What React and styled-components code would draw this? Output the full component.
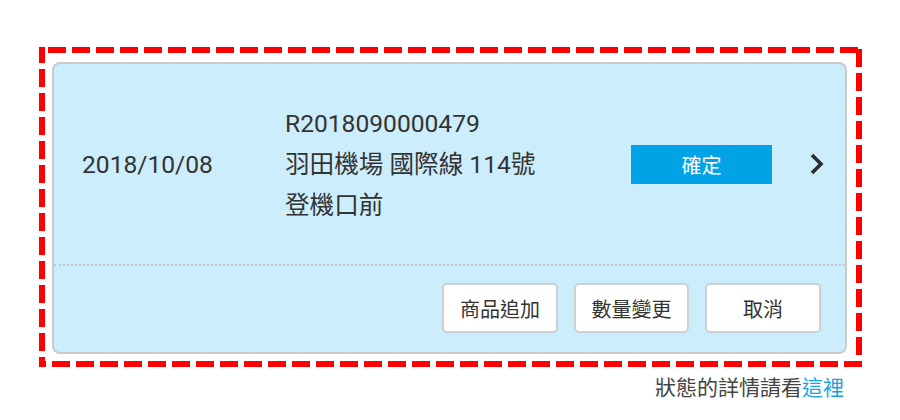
import React from 'react';
import styled, { createGlobalStyle } from 'styled-components';

const GlobalStyle = createGlobalStyle`
  body {
    margin: 0;
    background: #fff;
    font-family: Roboto, "Noto Sans CJK TC", "Noto Sans", sans-serif;
    color: #333;
  }
`;

const RED = '#ff0000';

const Page = styled.div`
  width: 900px;
  height: 420px;
  padding: 47px 0 0 39px;
  box-sizing: border-box;
`;

// dashed frame drawn with gradients so the dash / gap lengths match (18 / 6)
const Frame = styled.div`
  width: 823px;
  box-sizing: border-box;
  padding: 15px 15px 13px 13px;
  background-image:
    repeating-linear-gradient(to right, ${RED} 0 3px, transparent 3px 9px, ${RED} 9px 24px),
    repeating-linear-gradient(to right, ${RED} 0 7px, transparent 7px 13px, ${RED} 13px 24px),
    repeating-linear-gradient(to bottom, ${RED} 0 16px, transparent 16px 22px, ${RED} 22px 24px),
    repeating-linear-gradient(to bottom, transparent 0 2px, ${RED} 2px 20px, transparent 20px 24px);
  background-position: left top, left bottom, left top, right top;
  background-size: 100% 6px, 100% 6px, 6px 100%, 6px 100%;
  background-repeat: no-repeat;
`;

const Card = styled.div`
  background: #ccedfb;
  border: 2px solid #c9cbcc;
  border-radius: 8px;
`;

const Summary = styled.div`
  height: 200px;
  display: grid;
  grid-template-columns: 203px 346px 141px 1fr;
  align-items: center;
  padding-left: 28px;
  border-bottom: 2px dotted #c4c8ca;
`;

const DateText = styled.div`
  font-size: 24.6px;
  line-height: 41px;
`;

const Detail = styled.div`
  font-size: 24.6px;
  line-height: 41px;
  margin-top: 1px;
`;

const Status = styled.div`
  height: 39px;
  background: #00a3e6;
  color: #fff;
  font-size: 20px;
  display: flex;
  align-items: center;
  justify-content: center;
`;

const Arrow = styled.svg`
  justify-self: end;
  margin-right: 20px;
`;

const Actions = styled.div`
  display: flex;
  justify-content: flex-end;
  gap: 16px;
  padding: 17px 24px 19px;
`;

const ActionButton = styled.button`
  width: ${p => p.$w || 116}px;
  height: 50px;
  background: #fff;
  border: 2px solid #cdd0d2;
  border-radius: 5px;
  font-family: inherit;
  font-size: 20px;
  color: #333;
  padding: 0;
  cursor: pointer;
`;

const Note = styled.div`
  width: 823px;
  box-sizing: border-box;
  text-align: right;
  padding-right: 18px;
  margin-top: 8px;
  font-size: 21px;
  line-height: 26px;
  color: #444;

  a {
    color: #1aa3e3;
    text-decoration: none;
  }
`;

export default function App() {
  return (
    <Page>
      <GlobalStyle />
      <Frame>
        <Card>
          <Summary>
            <DateText>2018/10/08</DateText>
            <Detail>
              R2018090000479
              <br />
              羽田機場 國際線 114號
              <br />
              登機口前
            </Detail>
            <Status>確定</Status>
            <Arrow width="16" height="24" viewBox="0 0 16 24">
              <path d="M3 3 L12 12 L3 21" fill="none" stroke="#2b2b2b" strokeWidth="3.6" />
            </Arrow>
          </Summary>
          <Actions>
            <ActionButton>商品追加</ActionButton>
            <ActionButton $w={115}>數量變更</ActionButton>
            <ActionButton>取消</ActionButton>
          </Actions>
        </Card>
      </Frame>
      <Note>
        狀態的詳情請看<a href="#">這裡</a>
      </Note>
    </Page>
  );
}
